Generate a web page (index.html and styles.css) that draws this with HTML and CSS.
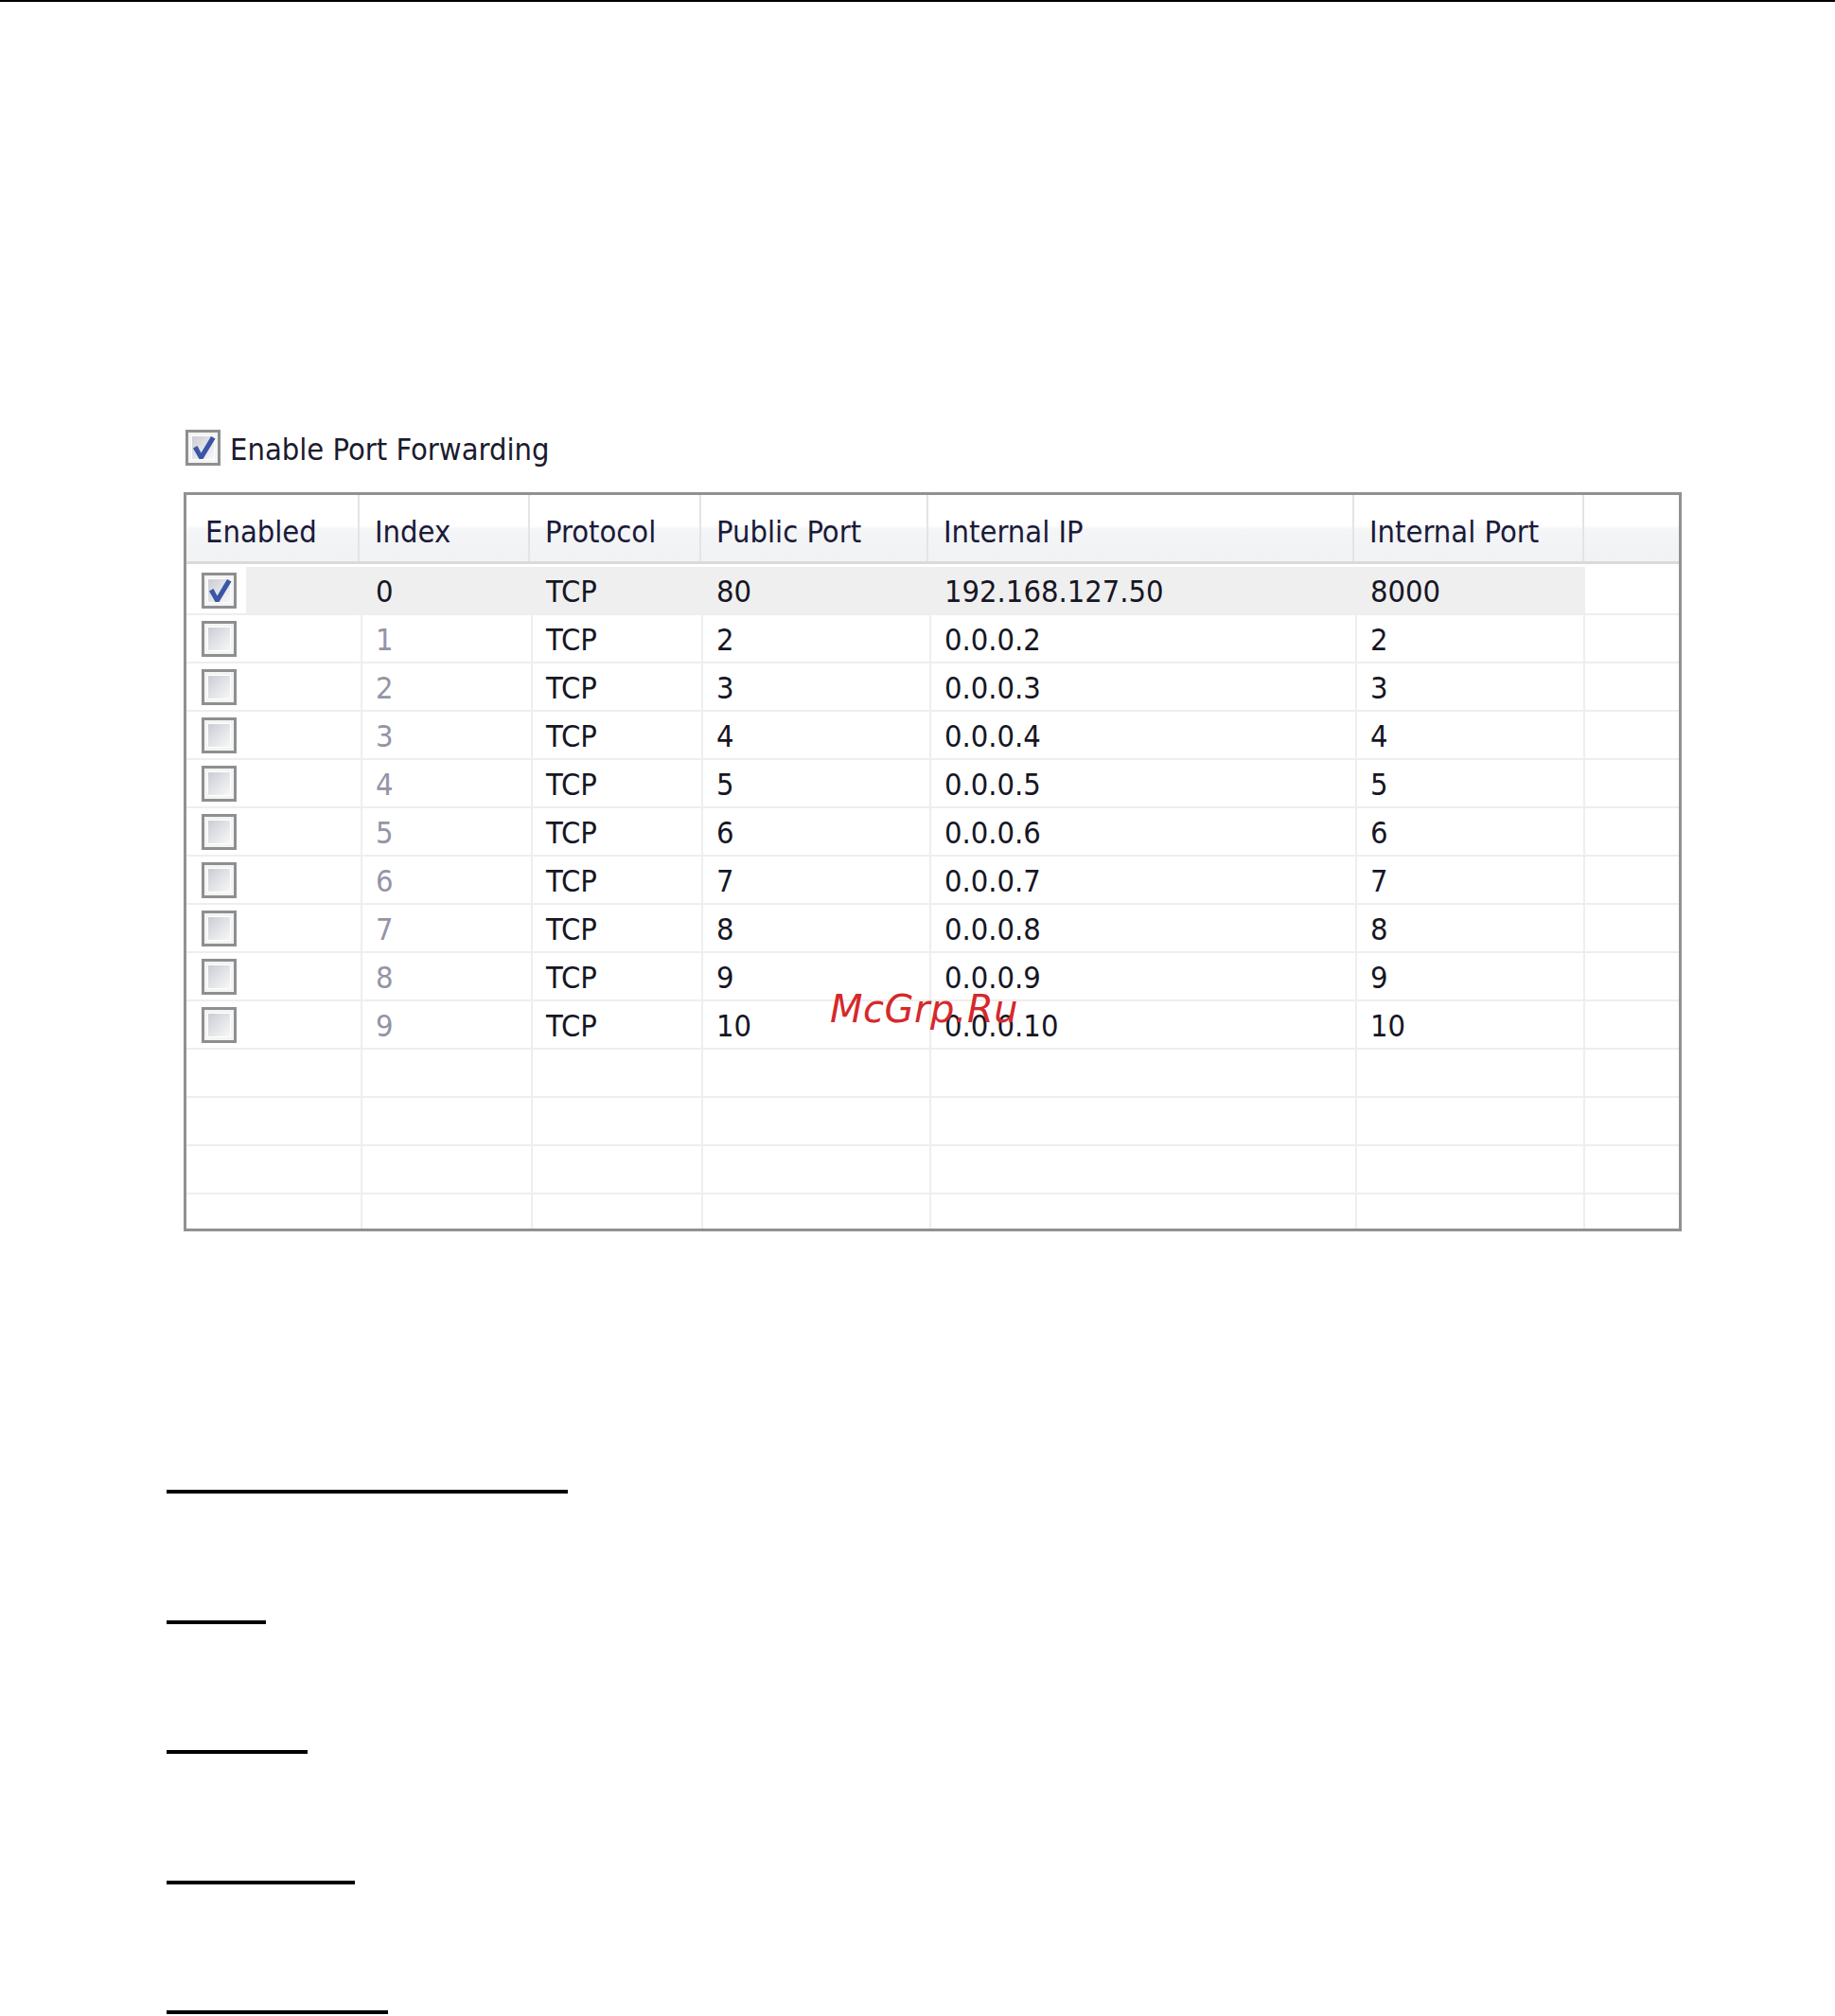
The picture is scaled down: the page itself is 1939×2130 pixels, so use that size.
FILE: index.html
```html
<!DOCTYPE html>
<html lang="en">
<head>
<meta charset="utf-8">
<title>Port Forwarding</title>
<link rel="stylesheet" href="styles.css">
</head>
<body>
<div class="page">
  <div class="rule-top"></div>

  <section class="panel">
    <label class="toggle">
      <span class="cb cb-on">
        <span class="cb-face"></span>
        <svg class="tick" viewBox="0 0 37 38" aria-hidden="true"><path d="M8 19.5 L12.5 17 L16.5 24.5 L27 7 L31.5 9.5 L18.5 31 L14.5 31 Z"/></svg>
      </span>
      <span class="toggle-text">Enable Port Forwarding</span>
    </label>

    <div class="listview">
      <div class="lv-head">
        <div class="hcell">Enabled</div>
        <div class="hcell">Index</div>
        <div class="hcell">Protocol</div>
        <div class="hcell">Public Port</div>
        <div class="hcell">Internal IP</div>
        <div class="hcell">Internal Port</div>
        <div class="hcell hcell-fill"></div>
      </div>
      <div class="lv-body">
        <div class="lv-row lv-row-sel">
          <div class="cell cell-check"><span class="cb cb-on"><span class="cb-face"></span><svg class="tick" viewBox="0 0 37 38" aria-hidden="true"><path d="M8 19.5 L12.5 17 L16.5 24.5 L27 7 L31.5 9.5 L18.5 31 L14.5 31 Z"/></svg></span></div>
          <div class="cell">0</div><div class="cell">TCP</div><div class="cell">80</div><div class="cell">192.168.127.50</div><div class="cell">8000</div><div class="cell cell-fill"></div>
        </div>
        <div class="lv-row">
          <div class="cell cell-check"><span class="cb"><span class="cb-face"></span></span></div>
          <div class="cell cell-idx">1</div><div class="cell">TCP</div><div class="cell">2</div><div class="cell">0.0.0.2</div><div class="cell">2</div><div class="cell cell-fill"></div>
        </div>
        <div class="lv-row">
          <div class="cell cell-check"><span class="cb"><span class="cb-face"></span></span></div>
          <div class="cell cell-idx">2</div><div class="cell">TCP</div><div class="cell">3</div><div class="cell">0.0.0.3</div><div class="cell">3</div><div class="cell cell-fill"></div>
        </div>
        <div class="lv-row">
          <div class="cell cell-check"><span class="cb"><span class="cb-face"></span></span></div>
          <div class="cell cell-idx">3</div><div class="cell">TCP</div><div class="cell">4</div><div class="cell">0.0.0.4</div><div class="cell">4</div><div class="cell cell-fill"></div>
        </div>
        <div class="lv-row">
          <div class="cell cell-check"><span class="cb"><span class="cb-face"></span></span></div>
          <div class="cell cell-idx">4</div><div class="cell">TCP</div><div class="cell">5</div><div class="cell">0.0.0.5</div><div class="cell">5</div><div class="cell cell-fill"></div>
        </div>
        <div class="lv-row">
          <div class="cell cell-check"><span class="cb"><span class="cb-face"></span></span></div>
          <div class="cell cell-idx">5</div><div class="cell">TCP</div><div class="cell">6</div><div class="cell">0.0.0.6</div><div class="cell">6</div><div class="cell cell-fill"></div>
        </div>
        <div class="lv-row">
          <div class="cell cell-check"><span class="cb"><span class="cb-face"></span></span></div>
          <div class="cell cell-idx">6</div><div class="cell">TCP</div><div class="cell">7</div><div class="cell">0.0.0.7</div><div class="cell">7</div><div class="cell cell-fill"></div>
        </div>
        <div class="lv-row">
          <div class="cell cell-check"><span class="cb"><span class="cb-face"></span></span></div>
          <div class="cell cell-idx">7</div><div class="cell">TCP</div><div class="cell">8</div><div class="cell">0.0.0.8</div><div class="cell">8</div><div class="cell cell-fill"></div>
        </div>
        <div class="lv-row">
          <div class="cell cell-check"><span class="cb"><span class="cb-face"></span></span></div>
          <div class="cell cell-idx">8</div><div class="cell">TCP</div><div class="cell">9</div><div class="cell">0.0.0.9</div><div class="cell">9</div><div class="cell cell-fill"></div>
        </div>
        <div class="lv-row">
          <div class="cell cell-check"><span class="cb"><span class="cb-face"></span></span></div>
          <div class="cell cell-idx">9</div><div class="cell">TCP</div><div class="cell">10</div><div class="cell">0.0.0.10</div><div class="cell">10</div><div class="cell cell-fill"></div>
        </div>
        <div class="lv-row"><div class="cell"></div><div class="cell"></div><div class="cell"></div><div class="cell"></div><div class="cell"></div><div class="cell"></div><div class="cell cell-fill"></div></div>
        <div class="lv-row"><div class="cell"></div><div class="cell"></div><div class="cell"></div><div class="cell"></div><div class="cell"></div><div class="cell"></div><div class="cell cell-fill"></div></div>
        <div class="lv-row"><div class="cell"></div><div class="cell"></div><div class="cell"></div><div class="cell"></div><div class="cell"></div><div class="cell"></div><div class="cell cell-fill"></div></div>
        <div class="lv-row"><div class="cell"></div><div class="cell"></div><div class="cell"></div><div class="cell"></div><div class="cell"></div><div class="cell"></div><div class="cell cell-fill"></div></div>
      </div>
    </div>
  </section>

  <div class="blanks">
    <div class="blank blank-1"></div>
    <div class="blank blank-2"></div>
    <div class="blank blank-3"></div>
    <div class="blank blank-4"></div>
    <div class="blank blank-5"></div>
  </div>

  <div class="stamp">McGrp.Ru</div>
</div>
</body>
</html>
```

FILE: styles.css
```css
html, body {
  margin: 0;
  padding: 0;
  background: #ffffff;
}

.page {
  position: relative;
  width: 1939px;
  min-height: 2130px;
  overflow: hidden;
}

.rule-top {
  height: 2px;
  background: #000;
}

/* ---- settings panel ---- */
.panel {
  padding-left: 194px;
  padding-top: 452px;
  font-family: "DejaVu Sans Condensed", "DejaVu Sans", sans-serif;
  font-stretch: condensed;
  font-size: 32.4px;
  color: #1b1b2e;
}

.toggle {
  display: flex;
  align-items: center;
  height: 38px;
  gap: 10px;
  padding-left: 2px;
}

.toggle-text {
  padding-top: 3px;
  white-space: nowrap;
}

/* checkbox */
.cb {
  position: relative;
  display: block;
  width: 37px;
  height: 38px;
  box-sizing: border-box;
  border: 3px solid #8e8f90;
  background: #f4f4f4;
  padding: 3px;
}

.cb-face {
  display: block;
  width: 100%;
  height: 100%;
  box-sizing: border-box;
  border: 1px solid #ffffff;
  background: linear-gradient(135deg, #c9ccd3 0%, #dfe1e5 45%, #f7f7f7 100%);
}

.tick {
  position: absolute;
  left: -3px;
  top: -3px;
  width: 37px;
  height: 38px;
}

.tick path {
  fill: #3b55a6;
}

/* ---- list view ---- */
.listview {
  margin-top: 28px;
  width: 1577px;
  height: 775px;
  border: 3px solid #919191;
  overflow: hidden;
  background: #fff;
}

.lv-head {
  display: grid;
  grid-template-columns: 183px 180px 181px 240px 450px 243px 1fr;
  height: 70px;
  border-bottom: 3px solid #d9dadc;
  background: linear-gradient(#ffffff 0%, #ffffff 46%, #f4f5f6 52%, #f1f2f3 100%);
}

.hcell {
  display: flex;
  align-items: center;
  padding-left: 20px;
  padding-top: 8px;
  border-right: 2px solid #e3e4e6;
  white-space: nowrap;
  color: #1a1a3a;
}

.hcell:first-child {
  padding-left: 20px;
}

.hcell + .hcell {
  padding-left: 16px;
}

.hcell-fill {
  border-right: none;
}

.lv-body {
  padding-top: 3px;
}

.lv-row {
  display: grid;
  grid-template-columns: 186px 180px 180px 241px 450px 241px 1fr;
  height: 49px;
  border-bottom: 2px solid #eeeeee;
}

.cell {
  display: flex;
  align-items: center;
  padding-left: 14px;
  padding-top: 3px;
  border-right: 2px solid #eeeeee;
  white-space: nowrap;
  color: #161624;
}

.cell-check {
  padding-left: 16px;
  padding-top: 1px;
}

.cell-idx {
  color: #9494a6;
}

.cell-fill {
  border-right: none;
}

.lv-row-sel .cell {
  background: #efefef;
  border-right-color: #efefef;
}

.lv-row-sel .cell-check {
  background: linear-gradient(to right, #ffffff 63px, #efefef 63px);
}

.lv-row-sel .cell-fill {
  background: #ffffff;
}

/* ---- underlined blanks ---- */
.blanks {
  display: flex;
  flex-direction: column;
  gap: 133.5px;
  padding-left: 176px;
  margin-top: 273px;
}

.blank {
  height: 4px;
  background: #000;
}

.blank-1 { width: 424px; }
.blank-2 { width: 105px; }
.blank-3 { width: 149px; }
.blank-4 { width: 199px; }
.blank-5 { width: 234px; }

/* ---- site stamp ---- */
.stamp {
  position: absolute;
  left: 877px;
  top: 1046px;
  font-family: "DejaVu Sans", sans-serif;
  font-style: italic;
  font-size: 40px;
  line-height: 40px;
  color: #d6282b;
  letter-spacing: 0.5px;
}
```
